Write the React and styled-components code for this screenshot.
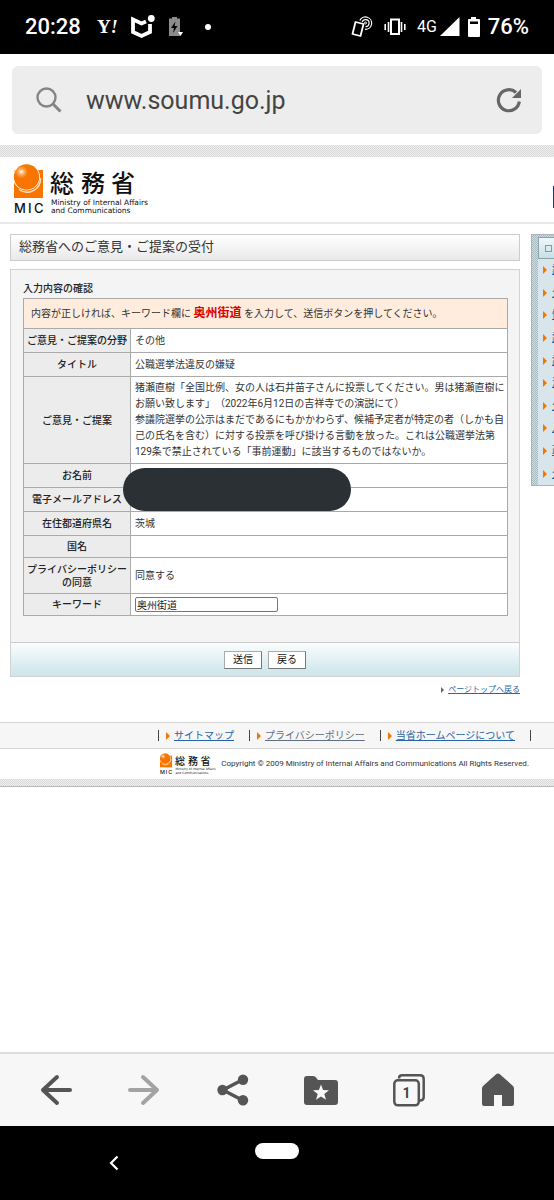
import React from "react";
import styled, { createGlobalStyle, css } from "styled-components";

const sideLinks = ["請", "公", "情", "調", "認", "法", "公", "入", "政", "公"];

export default function App() {
  return (
    <>
      <GlobalStyle />
      <Screen>
        <StatusBar />
        <AddressBar>
          <AddressBox>
            <SearchIcon />
            <AddressInput
              type="text"
              aria-label="URL"
              defaultValue="www.soumu.go.jp"
            />
            <IconButton type="button" aria-label="再読み込み">
              <ReloadIcon />
            </IconButton>
          </AddressBox>
        </AddressBar>

        <Page>
          <Hatch $size={12} />
          <Header>
            <Logo width={144} height={52} />
            <HeaderBadge />
          </Header>
          <Columns>
            <Main>
              <PageTitle>総務省へのご意見・ご提案の受付</PageTitle>
              <ConfirmForm />
              <PageTop>
                <SmallArrow />
                <a href="#top">ページトップへ戻る</a>
              </PageTop>
            </Main>
            <Sidebar>
              <SideHead>
                <i />
              </SideHead>
              <SideList>
                {sideLinks.map((label, i) => (
                  <li key={i}>
                    <Arrow />
                    <a href="#side">{label}</a>
                  </li>
                ))}
              </SideList>
            </Sidebar>
          </Columns>

          <FooterNav>
            <FooterItem>
              <Arrow />
              <FooterLink href="#sitemap">サイトマップ</FooterLink>
            </FooterItem>
            <FooterItem>
              <Arrow />
              <FooterLink href="#privacy" $visited>
                プライバシーポリシー
              </FooterLink>
            </FooterItem>
            <FooterItem $last>
              <Arrow />
              <FooterLink href="#about">当省ホームページについて</FooterLink>
            </FooterItem>
          </FooterNav>
          <Copyright>
            <Logo width={60} height={22} />
            <small>
              Copyright © 2009 Ministry of Internal Affairs and Communications
              All Rights Reserved.
            </small>
          </Copyright>
          <Hatch $size={8} $line />
        </Page>

        <Toolbar>
          <IconButton type="button" aria-label="戻る">
            <BackIcon />
          </IconButton>
          <IconButton type="button" aria-label="進む" disabled>
            <ForwardIcon />
          </IconButton>
          <IconButton type="button" aria-label="共有">
            <ShareIcon />
          </IconButton>
          <IconButton type="button" aria-label="ブックマーク">
            <FolderIcon />
          </IconButton>
          <IconButton type="button" aria-label="タブ">
            <TabsIcon />
          </IconButton>
          <IconButton type="button" aria-label="ホーム">
            <HomeIcon />
          </IconButton>
        </Toolbar>
        <SystemNav>
          <IconButton type="button" aria-label="システム戻る">
            <svg width="12" height="18" viewBox="0 0 12 18">
              <path
                d="M9.5 2.5 3 9l6.5 6.5"
                fill="none"
                stroke="#fff"
                strokeWidth="2.2"
              />
            </svg>
          </IconButton>
          <HomePill type="button" aria-label="システムホーム" />
        </SystemNav>
      </Screen>
    </>
  );
}

function StatusBar() {
  return (
    <StatusRow>
      <StatusGroup $gap={12}>
        <StatusText>20:28</StatusText>
        <svg width="26" height="20" viewBox="0 0 26 20">
          <text
            x="4"
            y="16"
            fill="#fff"
            fontFamily="Liberation Serif, serif"
            fontWeight="700"
            fontSize="19"
          >
            Y
            <tspan fontStyle="italic" fontSize="18">
              !
            </tspan>
          </text>
        </svg>
        <ShieldIcon />
        <svg width="16" height="20" viewBox="0 0 16 20">
          <path fill="#8c8c8c" d="M5 1.500V0h5v1.500h3V19H2V1.500z" />
          <path fill="#000" d="M8.500 4.500 4 11h3l-1 5 4.500-7h-3z" />
          <path fill="#fff" d="M11 15h5l-2.500 4z" />
        </svg>
        <Dot />
      </StatusGroup>
      <StatusGroup $gap={7}>
        <svg width="22" height="22" viewBox="0 0 22 22">
          <g fill="none" stroke="#fff">
            <path
              d="M4.500 6 12.500 8 9.500 20 1.500 18z"
              strokeWidth="1.800"
              strokeLinejoin="round"
            />
            <circle cx="14.500" cy="7" r="1" />
            <path d="M11.200 6.200a3.500 3.500 0 1 1 3.300 4.400" strokeWidth="1.200" />
            <path d="M8.800 4.500a6.200 6.200 0 1 1 5.200 8.800" strokeWidth="1.200" />
          </g>
        </svg>
        <VibrateBox>
          <svg width="22" height="18" viewBox="0 0 22 18">
            <g fill="none" stroke="#fff" strokeWidth="1.600">
              <rect x="7" y="1.500" width="8" height="14.500" strokeWidth="2" />
              <path d="M4.500 4v10M17.500 4v10M1.200 6v6M20.800 6v6" />
            </g>
          </svg>
        </VibrateBox>
        <Network>
          4G
          <svg width="20" height="20" viewBox="0 0 20 20">
            <path fill="#fff" d="M19.500 0v19H0z" />
          </svg>
        </Network>
        <svg width="14" height="20" viewBox="0 0 14 20">
          <path
            fill="#fff"
            fillRule="evenodd"
            d="M4 2V0h5v2h3q1 0 1 1v16q0 1-1 1H2q-1 0-1-1V3q0-1 1-1zM3 4.500V7h8V4.500z"
          />
        </svg>
        <StatusText>76%</StatusText>
      </StatusGroup>
    </StatusRow>
  );
}

function ConfirmForm() {
  return (
    <FormBox onSubmit={(e) => e.preventDefault()}>
      <FormBody>
        <FormHeading>入力内容の確認</FormHeading>
        <Table>
          <tbody>
            <tr>
              <Notice colSpan={2}>
                内容が正しければ、キーワード欄に <strong>奥州街道</strong>{" "}
                を入力して、送信ボタンを押してください。
              </Notice>
            </tr>
            <Row>
              <th scope="row">ご意見・ご提案の分野</th>
              <td>その他</td>
            </Row>
            <Row>
              <th scope="row">タイトル</th>
              <td>公職選挙法違反の嫌疑</td>
            </Row>
            <Row $tall>
              <th scope="row">ご意見・ご提案</th>
              <td>
                猪瀬直樹「全国比例、女の人は石井苗子さんに投票してください。男は猪瀬直樹にお願い致します」（2022年6月12日の吉祥寺での演説にて）
                <br />
                参議院選挙の公示はまだであるにもかかわらず、候補予定者が特定の者（しかも自己の氏名を含む）に対する投票を呼び掛ける言動を放った。これは公職選挙法第129条で禁止されている「事前運動」に該当するものではないか。
              </td>
            </Row>
            <Row>
              <th scope="row">お名前</th>
              <td>
                <Redaction />
              </td>
            </Row>
            <Row>
              <th scope="row">電子メールアドレス</th>
              <td />
            </Row>
            <Row>
              <th scope="row">在住都道府県名</th>
              <td>茨城</td>
            </Row>
            <Row $short>
              <th scope="row">国名</th>
              <td />
            </Row>
            <Row $tall>
              <th scope="row">
                プライバシーポリシー
                <br />
                の同意
              </th>
              <td>同意する</td>
            </Row>
            <Row $short>
              <th scope="row">
                <label htmlFor="keyword">キーワード</label>
              </th>
              <td>
                <KeywordInput id="keyword" type="text" defaultValue="奥州街道" />
              </td>
            </Row>
          </tbody>
        </Table>
      </FormBody>
      <FormActions>
        <FormButton type="submit">送信</FormButton>
        <FormButton type="button">戻る</FormButton>
      </FormActions>
    </FormBox>
  );
}

function Logo({ width, height }) {
  return (
    <svg
      width={width}
      height={height}
      viewBox="0 0 144 52"
      role="img"
      aria-label="総務省 MIC"
    >
      <defs>
        <radialGradient id="ball" cx="0.3" cy="0.3" r="0.5">
          <stop offset="0" stopColor="#fff" />
          <stop offset="0.2" stopColor="#ffb36b" />
          <stop offset="0.5" stopColor="#f97500" />
        </radialGradient>
      </defs>
      <rect x="0" y="6" width="29" height="28" fill="#f97500" />
      <circle cx="12.500" cy="13" r="13.500" fill="#fff" />
      <circle cx="12.500" cy="13" r="12.700" fill="url(#ball)" />
      <path
        d="M26.500 14A13.500 13.500 0 0 1 5 25.500"
        fill="none"
        stroke="#ffe2c4"
        strokeWidth="1.500"
      />
      <text
        x="0 14 20"
        y="49"
        fontFamily="Inter, sans-serif"
        fontSize="13"
        fontWeight="500"
        fill="#111"
      >
        MIC
      </text>
      <text
        x="36 67 97"
        y="28"
        fontFamily="Noto Sans CJK JP, sans-serif"
        fontSize="24"
        fontWeight="500"
        fill="#111"
      >
        総務省
      </text>
      <g fontFamily="DejaVu Sans, sans-serif" fontSize="7.500" fill="#111">
        <text x="37" y="41">
          Ministry of Internal Affairs
        </text>
        <text x="37" y="49">
          and Communications
        </text>
      </g>
    </svg>
  );
}

const Arrow = () => (
  <svg width="4" height="8" viewBox="0 0 4 8">
    <path fill="#f07800" d="M0 0 4 4 0 8z" />
  </svg>
);

const SmallArrow = () => (
  <svg width="3" height="6" viewBox="0 0 3 6">
    <path fill="#666" d="M0 0 3 3 0 6z" />
  </svg>
);

const ShieldIcon = () => (
  <svg width="24" height="24" viewBox="0 0 24 24">
    <path
      d="M15 6.500 10.500 8.500 2 4.500V17l8.500 4L19 17V9"
      fill="none"
      stroke="#fff"
      strokeWidth="3.800"
    />
    <circle cx="20.300" cy="3.500" r="3.400" fill="#fff" />
  </svg>
);

const SearchIcon = () => (
  <svg width="26" height="26" viewBox="0 0 26 26">
    <g fill="none" stroke="#858585" strokeWidth="2.400">
      <circle cx="10.500" cy="10.500" r="9" />
      <path d="M17 17l7.500 7.500" strokeWidth="3" />
    </g>
  </svg>
);

const ReloadIcon = () => (
  <svg width="26" height="26" viewBox="0 0 26 26">
    <path
      d="M23.300 14.500A10.500 10.500 0 1 1 20 5.500"
      fill="none"
      stroke="#666"
      strokeWidth="3.200"
    />
    <path fill="#666" d="M25 2v9h-9z" />
  </svg>
);

const BackIcon = () => (
  <svg width="32" height="32" viewBox="0 0 32 32">
    <path
      d="M17 3 3 16l14 13M3 16h27"
      fill="none"
      stroke="#555"
      strokeWidth="4"
      strokeLinecap="round"
      strokeLinejoin="round"
    />
  </svg>
);

const ForwardIcon = () => (
  <svg width="32" height="32" viewBox="0 0 32 32">
    <path
      d="M15 3 29 16 15 29M29 16H2"
      fill="none"
      stroke="#a3a3a3"
      strokeWidth="4"
      strokeLinecap="round"
      strokeLinejoin="round"
    />
  </svg>
);

const ShareIcon = () => (
  <svg width="32" height="32" viewBox="0 0 32 32">
    <path
      d="M26 5.500 6 16l20 10.500"
      fill="none"
      stroke="#555"
      strokeWidth="3.500"
    />
    <g fill="#555">
      <circle cx="5.500" cy="16" r="5.200" />
      <circle cx="26" cy="5.700" r="5.200" />
      <circle cx="26" cy="26.300" r="5.200" />
    </g>
  </svg>
);

const FolderIcon = () => (
  <svg width="34" height="32" viewBox="0 0 34 32">
    <path
      fill="#555"
      d="M0 5q0-3 3-3h6q2 0 3 1.500L14 6h17q3 0 3 3v19q0 3-3 3H3q-3 0-3-3z"
    />
    <path
      fill="#f7f7f7"
      d="m17 10.500 2.100 5.600 5.900.200-4.700 3.700 1.700 5.800-5-3.400-5 3.400 1.700-5.800L9 16.300l5.900-.2z"
    />
  </svg>
);

const TabsIcon = () => (
  <svg width="32" height="34" viewBox="0 0 32 34">
    <g fill="none" stroke="#555" strokeWidth="2.500">
      <path d="M6 5.500Q6 2.300 9 2.300h18q3.700 0 3.700 3.700v18q0 3.500-3.700 3.500" />
      <rect x="1.300" y="7.300" width="24.500" height="25" rx="3.500" />
    </g>
    <text
      x="13.500"
      y="25"
      textAnchor="middle"
      fontFamily="Roboto, sans-serif"
      fontWeight="700"
      fontSize="14"
      fill="#444"
    >
      1
    </text>
  </svg>
);

const HomeIcon = () => (
  <svg width="32" height="34" viewBox="0 0 32 34">
    <path
      fill="#555"
      d="M13.800 1.500q2.200-2 4.400 0L31 13q1 1 1 2.500V31q0 2-2 2H20V22h-8v11H2q-2 0-2-2V15.500Q0 14 1 13z"
    />
  </svg>
);

const GlobalStyle = createGlobalStyle`
  * {
    box-sizing: border-box;
  }

  body {
    margin: 0;
    background: #fff;
    color: #333;
    font-family: Roboto, "Noto Sans CJK JP", sans-serif;
    font-size: 10px;
    line-height: 16px;
    text-spacing-trim: space-all;
  }

  svg {
    display: block;
    flex: none;
  }

  button,
  input {
    font-family: inherit;
  }

  a {
    color: #2763a5;
  }
`;

const hatch = (dark, light) => css`
  background: repeating-conic-gradient(${dark} 0 25%, ${light} 0 50%) 0 0 / 2px
    2px;
`;

const Screen = styled.div`
  display: flex;
  flex-direction: column;
  min-height: 100vh;
`;

const StatusRow = styled.header`
  display: flex;
  align-items: center;
  justify-content: space-between;
  height: 54px;
  padding: 0 25px;
  background: #000;
  color: #fff;
`;

const StatusGroup = styled.div`
  display: flex;
  align-items: center;
  gap: ${(p) => p.$gap}px;
`;

const StatusText = styled.span`
  font-size: 22px;
  font-weight: 500;
  line-height: 26px;
`;

const Dot = styled.span`
  width: 6px;
  height: 6px;
  margin-left: 10px;
  border-radius: 50%;
  background: #fff;
`;

const VibrateBox = styled.span`
  padding: 0 4px;
`;

const Network = styled.span`
  display: flex;
  align-items: center;
  gap: 3px;
  font-family: "Liberation Sans Narrow", Roboto, sans-serif;
  font-size: 16px;
`;

const AddressBar = styled.div`
  padding: 12px 12px 11px;
`;

const AddressBox = styled.div`
  display: flex;
  align-items: center;
  gap: 24px;
  height: 68px;
  padding: 0 20px 0 24px;
  border-radius: 6px;
  background: #ededed;
`;

const AddressInput = styled.input`
  flex: 1;
  min-width: 0;
  padding: 2px 0 0;
  border: 0;
  outline: 0;
  background: none;
  color: #444;
  font-size: 25px;
  line-height: 32px;
`;

const IconButton = styled.button`
  display: flex;
  align-items: center;
  justify-content: center;
  padding: 0;
  border: 0;
  background: none;
`;

const Page = styled.div`
  flex: 1;
  overflow: hidden;
`;

const Hatch = styled.div`
  height: ${(p) => p.$size}px;
  ${hatch("#d9d9d9", "#efefef")}
  border-bottom: ${(p) => (p.$line ? "1px solid #bbb" : "0")};
`;

const Header = styled.div`
  display: flex;
  align-items: center;
  justify-content: space-between;
  height: 67px;
  padding-left: 14px;
  border-bottom: 2px solid #e9e9e9;
`;

const HeaderBadge = styled.span`
  width: 1px;
  height: 22px;
  margin-top: 14px;
  background: #123a8c;
`;

const Columns = styled.div`
  display: grid;
  grid-template-columns: 1fr 23px;
  align-items: start;
  gap: 11px;
  padding: 10px 0 0 10px;
`;

const Main = styled.main`
  min-width: 0;
`;

const PageTitle = styled.h1`
  height: 27px;
  margin: 0 0 8px;
  padding: 0 8px;
  border: 1px solid #ccc;
  background: linear-gradient(#fff, #e9e9eb);
  font-size: 13px;
  font-weight: 400;
  line-height: 24px;
`;

const FormBox = styled.form`
  border: 1px solid #d2d2d2;
`;

const FormBody = styled.div`
  padding: 11px 11px 26px 12px;
  ${hatch("#f1f1f1", "#f7f7f7")}
`;

const FormHeading = styled.h2`
  margin: 0 0 1px;
  color: #222;
  font-size: 10px;
  font-weight: 500;
`;

const Table = styled.table`
  width: 100%;
  border-collapse: collapse;
  background: #fff;

  th,
  td {
    border: 1px solid #aaa;
  }

  th {
    width: 107px;
    padding: 0;
    background: #ececec;
    color: #222;
    font-weight: 500;
    line-height: 13px;
  }
`;

const Notice = styled.td`
  height: 30px;
  padding: 0 7px;
  background: #ffecdc;

  strong {
    color: #e00000;
    font-size: 12px;
  }
`;

const Row = styled.tr`
  height: ${(p) => (p.$short ? 22 : p.$tall ? 36 : 24)}px;

  td {
    position: relative;
    padding: ${(p) => (p.$tall ? "3px 0 3px 4px" : "0 0 0 4px")};
  }
`;

const Redaction = styled.div`
  position: absolute;
  z-index: 1;
  top: 4px;
  left: -8px;
  width: 228px;
  height: 43px;
  border-radius: 22px;
  background: #2b3034;
`;

const KeywordInput = styled.input`
  display: block;
  width: 143px;
  height: 15px;
  padding: 0 1px;
  border: 1px solid #767676;
  border-radius: 2px;
  color: #222;
  font-size: 10px;
`;

const FormActions = styled.div`
  display: flex;
  align-items: center;
  justify-content: center;
  gap: 6px;
  height: 34px;
  border-top: 1px solid #ccc;
  background: linear-gradient(#fbfdfe, #cbe4ea);
`;

const FormButton = styled.button`
  width: 38px;
  height: 18px;
  padding: 0;
  border: 1px solid #aaa;
  border-right-color: #777;
  border-bottom-color: #777;
  background: #fff;
  color: #111;
  font-size: 10px;
  line-height: 14px;
`;

const PageTop = styled.p`
  display: flex;
  align-items: center;
  justify-content: flex-end;
  gap: 4px;
  margin: 5px 0 24px;
  font-size: 8px;
`;

const Sidebar = styled.aside`
  display: flex;
  flex-direction: column;
  height: 252px;
  overflow: hidden;
  padding: 2px 0 0 6px;
  border: solid #aab3b7;
  border-width: 1px 0 1px 1px;
  ${hatch("#a9b9c0", "#d3dde1")}
`;

const SideHead = styled.div`
  height: 22px;
  padding: 7px 6px;
  border: 1px solid #8fa3aa;
  border-right: 0;
  background: linear-gradient(#eef8fa, #c6e0e7);

  i {
    display: block;
    width: 7px;
    height: 7px;
    border: 1px solid #6fa3b2;
  }
`;

const SideList = styled.ul`
  display: flex;
  flex: 1;
  flex-direction: column;
  margin: 0;
  padding: 0 0 0 5px;
  background: #d8e5ea;
  list-style: none;

  li {
    display: flex;
    flex: 1;
    align-items: center;
    gap: 5px;
  }
`;

const FooterNav = styled.ul`
  display: flex;
  align-items: center;
  justify-content: flex-end;
  height: 27px;
  margin: 0;
  padding: 0 23px 0 0;
  border: solid #d4d4d4;
  border-width: 1px 0;
  background: #f6f6f6;
  list-style: none;
`;

const FooterItem = styled.li`
  display: flex;
  align-items: center;
  gap: 4px;
  height: 11px;
  padding: 0 15px 0 7px;
  border-left: 1px solid #444;
  border-right: ${(p) => (p.$last ? "1px solid #444" : "0")};
`;

const FooterLink = styled.a`
  color: ${(p) => (p.$visited ? "#5f6f80" : "#2763a5")};
`;

const Copyright = styled.div`
  display: flex;
  align-items: center;
  justify-content: flex-end;
  gap: 1px;
  height: 30px;
  padding-right: 25px;

  small {
    font-size: 8px;
    line-height: 10px;
    white-space: nowrap;
  }
`;

const Toolbar = styled.nav`
  display: grid;
  grid-template-columns: repeat(6, 1fr);
  height: 74px;
  padding: 0 12px;
  border-top: 2px solid #dcdcdc;
  background: #f7f7f7;
`;

const SystemNav = styled.nav`
  display: grid;
  grid-template-columns: repeat(3, 1fr);
  align-items: center;
  height: 74px;
  padding: 0 32px;
  background: #000;
`;

const HomePill = styled.button`
  align-self: start;
  justify-self: center;
  width: 44px;
  height: 16px;
  margin-top: 17px;
  padding: 0;
  border: 0;
  border-radius: 8px;
  background: #fff;
`;
